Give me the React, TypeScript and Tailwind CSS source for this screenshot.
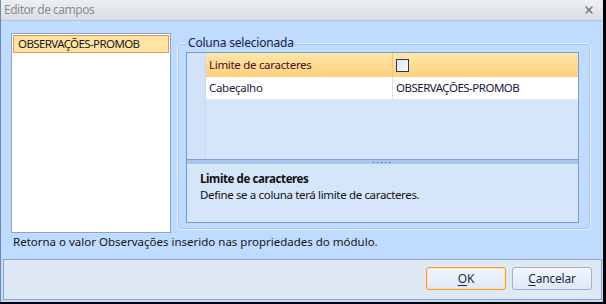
import { X } from 'lucide-react';

const font = "font-['Noto_Sans','DejaVu_Sans',sans-serif]";

function Btn({ label, hot, primary }: { label: string; hot: string; primary?: boolean }) {
  const rest = label.slice(1);
  return (
    <button
      className={`h-[23px] w-[80px] rounded-[3px] border bg-gradient-to-b from-[#f3f7fd] to-[#dde8f6] text-[12px] tracking-[-0.2px] text-[#1b2a48] ${
        primary ? 'border-[#f29a2e] shadow-[inset_0_0_0_1px_#fde3b4]' : 'border-[#9fb2cf]'
      }`}
    >
      <span className="underline underline-offset-2">{hot}</span>
      {rest}
    </button>
  );
}

export default function App() {
  return (
    <div className={`w-[606px] h-[304px] bg-black overflow-hidden ${font}`}>
      <div className="w-[603px] h-[302px] flex flex-col bg-[#bfdbff] border-l border-[#6f88a8]">
        {/* title bar */}
        <div className="h-[21px] shrink-0 flex items-center justify-between pl-[3px] pr-[8px] bg-gradient-to-b from-[#eeeff1] to-[#dadee5] border-b border-[#a9c4ea]">
          <span className="text-[12px] tracking-[-0.5px] text-[#8b8e94] leading-none">Editor de campos</span>
          <X size={12} strokeWidth={3} className="text-[#6b7a8f]" />
        </div>

        {/* main */}
        <div className="flex ml-[10px] mt-[12px] gap-[6px]">
          <div className="w-[160px] h-[200px] bg-white border border-[#86a4d4] p-px">
            <div className="h-[18px] flex items-center pl-[4px] bg-[#ffe4a6] border border-[#e8954c] text-[11.5px] tracking-[-0.6px] text-[#1a1a1a]">
              OBSERVAÇÕES-PROMOB
            </div>
          </div>

          <fieldset className="mt-[3px] w-[414px] h-[194px] border border-[#e2eeff] rounded-[4px] shadow-[inset_0_0_0_1px_#abc6ec] px-[8px] pb-[6px]">
            <legend className="ml-0 px-[2px] text-[12px] leading-[14px] tracking-[-0.2px] text-[#15233d]">Coluna selecionada</legend>
            <div className="mt-[2px] h-[171px] w-[393px] flex flex-col border border-[#7a9bd2] bg-[#d5e6fb]">
              <div className="h-[106px] flex">
                <div className="w-[19px] bg-[#d2e3f9] border-r border-[#c4d8f3]" />
                <div className="flex-1 flex flex-col">
                  <div className="h-[24px] flex bg-gradient-to-b from-[#ffe7a9] to-[#fdd07a] text-[11.5px] tracking-[-0.3px] text-[#4a0b28]">
                    <div className="w-[187px] flex items-center pl-[3px] border-r border-[#f1c87c]">Limite de caracteres</div>
                    <div className="flex-1 flex items-center pl-[3px]">
                      <div className="w-[13px] h-[13px] border border-[#1f3a6a] bg-gradient-to-br from-[#dfe6ef] to-[#f6f8fb]" />
                    </div>
                  </div>
                  <div className="h-[23px] flex bg-white border-b border-[#e1e9f4] text-[11.5px] tracking-[-0.3px] text-[#1c1640]">
                    <div className="w-[187px] flex items-center pl-[3px] border-r border-[#dbe4f1]">Cabeçalho</div>
                    <div className="flex-1 flex items-center pl-[3px] tracking-[-0.5px]">OBSERVAÇÕES-PROMOB</div>
                  </div>
                </div>
              </div>
              {/* splitter */}
              <div className="h-[5px] bg-[#a9c5ee] border-t border-[#7d9ed4] flex items-center pl-[186px] gap-[3px]">
                <div className="w-px h-px bg-[#3f63a8]" />
                <div className="w-px h-px bg-[#3f63a8]" />
                <div className="w-px h-px bg-[#3f63a8]" />
                <div className="w-px h-px bg-[#3f63a8]" />
                <div className="w-px h-px bg-[#3f63a8]" />
              </div>
              <div className="flex-1 pl-[13px] pt-[8px] text-[11.5px] text-[#111]">
                <div className="font-bold leading-[14px] tracking-[-0.4px]">Limite de caracteres</div>
                <div className="leading-[16px] mt-[1px] tracking-[-0.35px]">Define se a coluna terá limite de caracteres.</div>
              </div>
            </div>
          </fieldset>
        </div>

        <div className="ml-[12px] mt-[2px] text-[11.5px] leading-[14px] text-[#151515]">
          Retorna o valor Observações inserido nas propriedades do módulo.
        </div>

        {/* bottom panel */}
        <div className="mt-auto mb-[2px] ml-[2px] mr-px h-[41px] flex justify-end items-start gap-[6px] pt-[7px] pr-[9px] bg-[#dfe9f6] border border-[#8fa6c6]">
          <Btn label="OK" hot="O" primary />
          <Btn label="Cancelar" hot="C" />
        </div>
      </div>
    </div>
  );
}
